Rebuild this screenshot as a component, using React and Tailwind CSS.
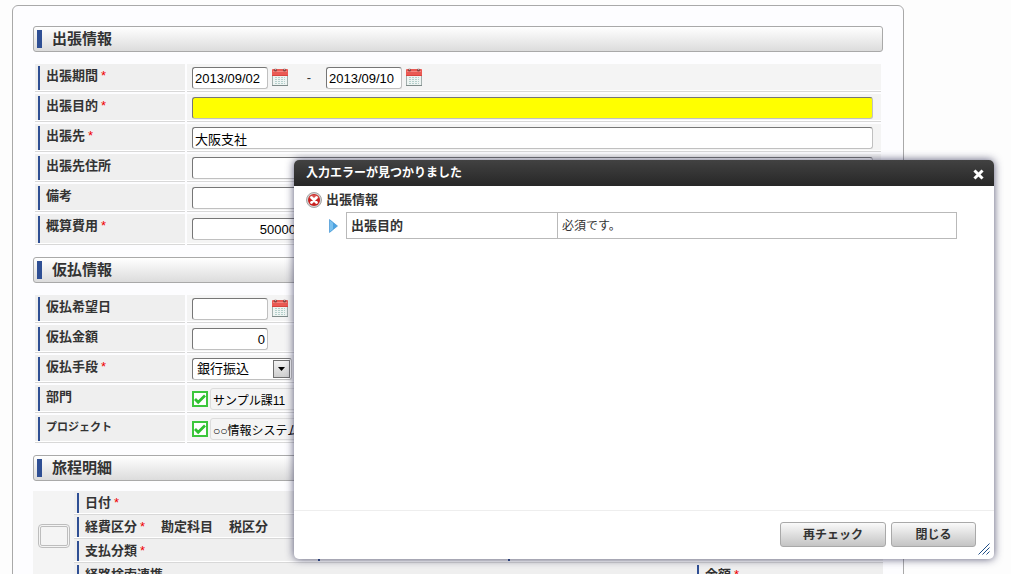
import { useState } from "react";

const inputStyle =
  "h-[22px] rounded-[3px] border border-t-[#767676] border-l-[#767676] border-r-[#c0c0c0] border-b-[#c0c0c0] px-0.5 text-[13px] text-black outline-none";

function CalendarIcon() {
  return (
    <svg width="16" height="18" viewBox="0 0 16 18" aria-hidden="true">
      <rect x="0.5" y="2.5" width="15" height="15" fill="#eef4f2" stroke="#a3afad" />
      <path d="M0 17.5H16" stroke="#7f8b89" />
      <path d="M0 2Q0 1 1 1H15Q16 1 16 2V8H0Z" fill="#ea5a54" />
      <path d="M0 7.5H16" stroke="#d8443f" />
      <path d="M1 3.5H15" stroke="#f38983" />
      <path d="M3 9.5H13M3 11.5H13M3 13.5H13M3 15.5H13" stroke="#b4cfcb" strokeDasharray="2 1" />
      <circle cx="3.5" cy="2" r="1.6" fill="#8d4340" />
      <circle cx="12.5" cy="2" r="1.6" fill="#8d4340" />
      <circle cx="3.5" cy="1" r="0.8" fill="#ddd" />
      <circle cx="12.5" cy="1" r="0.8" fill="#ddd" />
    </svg>
  );
}

function ErrorIcon() {
  return (
    <svg width="16" height="16" viewBox="0 0 16 16" aria-hidden="true">
      <circle cx="8" cy="8" r="7.5" fill="#d5d5d5" stroke="#a5a5a5" />
      <circle cx="8" cy="8" r="6" fill="#c9211f" />
      <path d="M3 6a5.5 5.5 0 0 1 10 0Q8 8 3 6" fill="#d9524e" />
      <path d="M5.5 5.5L10.5 10.5M10.5 5.5L5.5 10.5" stroke="#fff" strokeWidth="2.8" strokeLinecap="round" />
    </svg>
  );
}

function Required() {
  return <span className="ml-[3px] font-normal text-[#f00000]">*</span>;
}

function SectionTitle({ children }) {
  return (
    <h2 className="flex h-[26px] items-center rounded-[3px] border border-[#a9a9a9] bg-linear-to-b from-white to-[#dcdcdc] pl-[3px] text-[15px] font-bold">
      <span className="mr-2.5 h-[18px] w-[5px] bg-[#2f4f94]"></span>
      {children}
    </h2>
  );
}

function Field({ label, htmlFor, required, tall, small, children }) {
  return (
    <div className="grid grid-cols-[150px_1fr] gap-x-0.5">
      <div className="border-b border-[#d8d8d8] bg-[#efefef] pt-0.5 pb-px pl-[3px] shadow-[inset_0_-1px_0_#fff]">
        <div className="h-full border-l-2 border-[#2f4f94] pl-1.5 leading-5">
          <label htmlFor={htmlFor} className={small ? "text-[11px] font-bold" : "font-bold"}>{label}</label>
          {required && <Required />}
        </div>
      </div>
      <div
        className={
          "flex items-start border-b border-[#d8d8d8] bg-[#f4f4f4] pr-2 pl-[5px] shadow-[inset_0_-1px_0_#fff] " +
          (tall ? "h-[31px] pt-1" : "h-7 pt-[3px]")
        }
      >
        {children}
      </div>
    </div>
  );
}

function DateInput({ id, label, value }) {
  return (
    <div className="flex items-start gap-1">
      <input id={id} aria-label={label} defaultValue={value} className={inputStyle + " w-[76px] bg-white"} />
      <button type="button" aria-label="カレンダー" className="pt-px">
        <CalendarIcon />
      </button>
    </div>
  );
}

function CheckedInput({ id, label, value }) {
  return (
    <div className="flex items-center gap-0.5">
      <span className="relative size-4">
        <input
          type="checkbox"
          defaultChecked
          aria-label={label}
          className="block size-4 appearance-none border-2 border-[#3cc63c] bg-white"
        />
        <svg className="pointer-events-none absolute inset-0" width="16" height="16" viewBox="0 0 16 16" aria-hidden="true">
          <path d="M3 8L6.2 11.2L13 4.5" fill="none" stroke="#2fc02f" strokeWidth="2.8" />
        </svg>
      </span>
      <input
        id={id}
        readOnly
        defaultValue={value}
        className="h-[22px] w-[200px] rounded-[3px] border border-[#dcdcdc] bg-[#f4f4f4] px-0.5 text-[12px] text-black outline-none"
      />
    </div>
  );
}

function DetailCell({ children }) {
  return (
    <div className="h-6 border-b border-[#d8d8d8] bg-[#efefef] pt-0.5 pb-px pl-[3px] shadow-[inset_0_-1px_0_#fff]">
      <div className="flex h-full items-center border-l-2 border-[#2f4f94] pl-1.5 font-bold">{children}</div>
    </div>
  );
}

function DialogButton({ className, onClick, children }) {
  return (
    <button
      type="button"
      onClick={onClick}
      className={"h-[25px] rounded-[3px] border border-[#a9a9a9] bg-linear-to-b from-[#fafafa] to-[#c4c4c4] text-[12px] font-bold " + className}
    >
      {children}
    </button>
  );
}

function ErrorDialog({ onClose }) {
  return (
    <div
      role="dialog"
      aria-labelledby="dialog-title"
      className="absolute top-40 right-[17px] flex min-h-[399px] w-[700px] flex-col overflow-hidden rounded-[5px] bg-white shadow-[0_0_8px_rgba(30,30,70,0.75)]"
    >
      <div className="flex h-[26px] items-center justify-between bg-linear-to-b from-[#424242] to-[#272727] pr-2.5 pl-3 text-white">
        <h2 id="dialog-title" className="text-[12px] font-bold">入力エラーが見つかりました</h2>
        <button type="button" aria-label="閉じる" onClick={onClose} className="pt-0.5">
          <svg width="11" height="11" viewBox="0 0 11 11" aria-hidden="true">
            <path d="M2.5 2.5L8.5 8.5M8.5 2.5L2.5 8.5" stroke="#fff" strokeWidth="3" strokeLinecap="square" />
          </svg>
        </button>
      </div>

      <div className="flex-1 pt-1 pr-[37px] pl-3">
        <h3 className="mb-0.5 flex h-5 items-center gap-1 font-bold">
          <ErrorIcon />
          出張情報
        </h3>
        <div className="flex items-center pl-[23px]">
          <svg width="9" height="14" viewBox="0 0 9 14" className="mr-2 shrink-0" aria-hidden="true">
            <path d="M0.5 0.5L8.5 7L0.5 13.5Z" fill="#4da3e0" />
            <path d="M1 1L4 3.5V10.5L1 13Z" fill="#79c0ee" />
            <path d="M0.5 0.5L8.5 7L0.5 13.5Z" fill="none" stroke="#3a8fd0" strokeWidth="0.6" />
          </svg>
          <table className="w-full table-fixed border-collapse">
            <tbody>
              <tr className="h-[26px]">
                <th className="w-[211px] border border-[#b9b9b9] pl-1 text-left font-bold">出張目的</th>
                <td className="border border-[#b9b9b9] pl-1 text-[12px]">必須です。</td>
              </tr>
            </tbody>
          </table>
        </div>
      </div>

      <div className="flex h-[49px] items-start justify-end gap-[5px] border-t border-[#eee] pt-[11px] pr-[18px]">
        <DialogButton className="w-[106px]">再チェック</DialogButton>
        <DialogButton className="w-[85px]" onClick={onClose}>閉じる</DialogButton>
      </div>
      <svg className="absolute right-1 bottom-1 cursor-se-resize" width="12" height="12" viewBox="0 0 12 12" aria-hidden="true">
        <path d="M0.5 11.5L11.5 0.5M4.5 11.5L11.5 4.5M8.5 11.5L11.5 8.5" stroke="#1f4e86" />
      </svg>
    </div>
  );
}

export default function App() {
  const [open, setOpen] = useState(true);

  return (
    <div className="relative h-screen overflow-hidden bg-[#fdfdfd] pt-[5px] pr-[107px] pl-3 font-['Liberation_Sans','Noto_Sans_CJK_JP',sans-serif] text-[13px] leading-5 text-[#333]">
      <form className="rounded-[6px] border border-[#a9a9a9] bg-[#fdfdff] px-5 pt-5 pb-5">
        <SectionTitle>出張情報</SectionTitle>
        <div className="mx-0.5 my-3 flex flex-col gap-0.5">
          <Field label="出張期間" htmlFor="from" required>
            <DateInput id="from" value="2013/09/02" />
            <span className="w-[38px] pl-1 text-center leading-[22px]">-</span>
            <DateInput id="to" label="終了日" value="2013/09/10" />
          </Field>
          <Field label="出張目的" htmlFor="purpose" required>
            <input id="purpose" className={inputStyle + " w-full bg-[#ffff00]"} />
          </Field>
          <Field label="出張先" htmlFor="destination" required>
            <input id="destination" defaultValue="大阪支社" className={inputStyle + " w-full bg-white"} />
          </Field>
          <Field label="出張先住所" htmlFor="address">
            <input id="address" className={inputStyle + " w-full bg-white"} />
          </Field>
          <Field label="備考" htmlFor="note">
            <input id="note" className={inputStyle + " w-full bg-white"} />
          </Field>
          <Field label="概算費用" htmlFor="cost" required tall>
            <input id="cost" defaultValue="50000" className={inputStyle + " w-[107px] bg-white text-right"} />
          </Field>
        </div>

        <SectionTitle>仮払情報</SectionTitle>
        <div className="mx-0.5 my-3 flex flex-col gap-0.5">
          <Field label="仮払希望日" htmlFor="advance-date">
            <DateInput id="advance-date" />
          </Field>
          <Field label="仮払金額" htmlFor="advance">
            <input id="advance" defaultValue="0" className={inputStyle + " w-[76px] bg-white text-right"} />
          </Field>
          <Field label="仮払手段" htmlFor="method" required>
            <div className="relative">
              <select id="method" className={inputStyle + " w-[100px] appearance-none bg-white pl-1 leading-5"}>
                <option>銀行振込</option>
              </select>
              <span className="pointer-events-none absolute top-0.5 right-0.5 flex h-[18px] w-[17px] items-center justify-center border border-[#707070] bg-linear-to-b from-[#f2f2f2] to-[#cfcfcf]">
                <svg width="7" height="4" viewBox="0 0 7 4" aria-hidden="true">
                  <path d="M0 0H7L3.5 4Z" fill="#000" />
                </svg>
              </span>
            </div>
          </Field>
          <Field label="部門" htmlFor="department">
            <CheckedInput id="department" label="部門を選択" value="サンプル課11" />
          </Field>
          <Field label="プロジェクト" htmlFor="project" small>
            <CheckedInput id="project" label="プロジェクトを選択" value="○○情報システム" />
          </Field>
        </div>

        <SectionTitle>旅程明細</SectionTitle>
        <div className="mt-2.5 flex">
          <div className="w-[41px] bg-[#f4f4f4] pt-[33px] pl-[5px]">
            <button
              type="button"
              aria-label="明細を選択"
              className="block h-6 w-8 rounded-[4px] border-[3px] border-double border-[#bdbdbd] bg-[#f4f4f4]"
            ></button>
          </div>
          <div className="min-w-0 flex-1">
            <DetailCell>
              日付
              <Required />
            </DetailCell>
            <DetailCell>
              経費区分
              <Required />
              <span className="ml-4">勘定科目</span>
              <span className="ml-4">税区分</span>
            </DetailCell>
            <div className="grid grid-cols-[241px_190px_1fr]">
              <DetailCell>
                支払分類
                <Required />
              </DetailCell>
              <DetailCell />
              <DetailCell />
            </div>
            <div className="grid grid-cols-[1fr_189px]">
              <DetailCell>経路検索連携</DetailCell>
              <DetailCell>
                金額
                <Required />
              </DetailCell>
            </div>
          </div>
        </div>
      </form>

      {open && <ErrorDialog onClose={() => setOpen(false)} />}
    </div>
  );
}
